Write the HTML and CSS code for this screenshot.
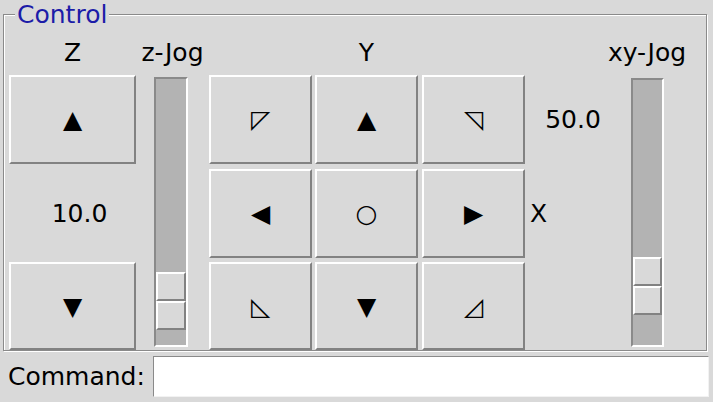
FILE: index.html
```html
<!DOCTYPE html>
<html lang="en">
<head>
    <meta charset="UTF-8">
    <title>Control</title>
    <link rel="stylesheet" href="styles.css">
</head>
<body>
    <fieldset class="control">
        <legend>Control</legend>
        <div class="grid">
            <div class="head col-z">Z</div>
            <div class="head col-zjog">z-Jog</div>
            <div class="head col-y">Y</div>
            <div class="head col-xyjog">xy-Jog</div>

            <button class="btn z-btn r1">&#9650;</button>
            <div class="value step-z col-z r2">10.0</div>
            <button class="btn z-btn r3 short">&#9660;</button>

            <div class="scale z-scale">
                <div class="slider" style="top: 193px"><div class="half"></div><div class="half"></div></div>
            </div>

            <button class="btn xy c1 r1">&#9720;</button>
            <button class="btn xy c2 r1">&#9650;</button>
            <button class="btn xy c3 r1">&#9721;</button>
            <button class="btn xy c1 r2">&#9664;</button>
            <button class="btn xy c2 r2">&#9675;</button>
            <button class="btn xy c3 r2">&#9654;</button>
            <button class="btn xy c1 r3 short">&#9722;</button>
            <button class="btn xy c2 r3 short">&#9660;</button>
            <button class="btn xy c3 r3 short">&#9727;</button>

            <div class="value col-step r1">50.0</div>
            <div class="value axis col-step r2">X</div>

            <div class="scale xy-scale">
                <div class="slider" style="top: 177px"><div class="half"></div><div class="half"></div></div>
            </div>
        </div>
    </fieldset>

    <div class="cmd">
        <label for="command">Command:</label>
        <input type="text" id="command">
    </div>
</body>
</html>
```

FILE: styles.css
```css
body {
    margin: 0;
    width: 713px;
    height: 402px;
    overflow: hidden;
    background-color: #d9d9d9;
    font-family: "DejaVu Sans", sans-serif;
    font-size: 25px;
    color: #000;
}
.control {
    box-sizing: border-box;
    width: 704px;
    margin: 0 0 0 3px;
    padding: 9px 0 0 5px;
    min-inline-size: 0;
    border: 1px solid #8a8a8a;
    box-shadow: inset 1px 1px 0 #fff, 1px 1px 0 #fff;
}
.control legend {
    margin-left: 6px;
    padding: 0 2px;
    line-height: 29px;
    color: #1c1ca8;
    background-color: #d9d9d9;
}
.grid {
    display: grid;
    grid-template-columns: 127px 73px 106px 107px 106px 90px 58px;
    grid-template-rows: 37px 94px 93px 88px;
}
.head {
    grid-row: 1;
    line-height: 29px;
    justify-self: center;
    align-self: start;
    white-space: nowrap;
}
.col-z { grid-column: 1; }
.col-zjog { grid-column: 2; }
.col-y {
    grid-column: 3 / 6;
    margin-right: 4px;
}
.col-xyjog { grid-column: 7; }
.col-step { grid-column: 6; }
.r1 { grid-row: 2; }
.r2 { grid-row: 3; }
.r3 { grid-row: 4; }
.c1 { grid-column: 3; }
.c2 { grid-column: 4; }
.c3 { grid-column: 5; }

.btn {
    box-sizing: border-box;
    height: 89px;
    padding: 0;
    margin: 0;
    display: flex;
    align-items: center;
    justify-content: center;
    font: inherit;
    color: #000;
    background-color: #d9d9d9;
    border: 2px solid;
    border-color: #fff #828282 #828282 #fff;
    align-self: start;
    justify-self: start;
}
.btn.short { height: 88px; }
.z-btn {
    grid-column: 1;
    width: 127px;
}
.xy { width: 103px; }

.value {
    height: 89px;
    display: flex;
    align-items: center;
    justify-content: center;
    line-height: 29px;
    align-self: start;
}
.value.step-z {
    padding-left: 14px;
}
.value.axis {
    justify-content: flex-start;
    padding-left: 2px;
}

.scale {
    position: relative;
    box-sizing: border-box;
    grid-row: 2 / 5;
    align-self: start;
    background-color: #b3b3b3;
    border: 2px solid;
    border-color: #8a8a8a #fff #fff #8a8a8a;
}
.z-scale {
    grid-column: 2;
    justify-self: start;
    margin: 2px 0 0 18px;
    width: 34px;
    height: 270px;
}
.xy-scale {
    grid-column: 7;
    justify-self: center;
    margin-top: 3px;
    width: 33px;
    height: 269px;
}
.slider {
    position: absolute;
    left: 0;
    right: 0;
}
.half {
    box-sizing: border-box;
    height: 29px;
    background-color: #d9d9d9;
    border: 2px solid;
    border-color: #fff #828282 #828282 #fff;
}

.cmd {
    display: flex;
    align-items: center;
    gap: 8px;
    padding: 5px 4px 0 8px;
}
.cmd label {
    white-space: nowrap;
}
.cmd input {
    flex: 1;
    min-width: 0;
    box-sizing: border-box;
    height: 41px;
    margin: 0;
    padding: 0 4px;
    font: inherit;
    background-color: #fff;
    border: 1px solid;
    border-color: #8a8a8a #f2f2f2 #f2f2f2 #8a8a8a;
    outline: none;
}
```
